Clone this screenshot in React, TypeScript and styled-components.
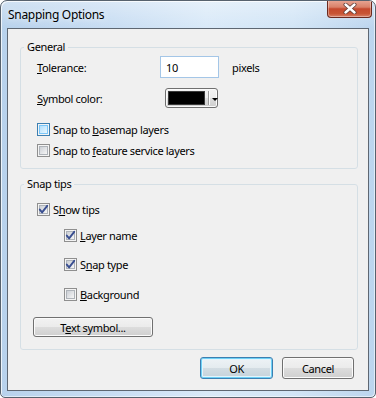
import React from "react";
import styled, { createGlobalStyle, css } from "styled-components";

const FONT = `"Noto Sans", "Open Sans", "DejaVu Sans", sans-serif`;

const Global = createGlobalStyle`
  html, body { margin: 0; padding: 0; background: #ffffff; }
  body { font-family: ${FONT}; font-size: 11px; color: #000; }
  * { box-sizing: border-box; }
`;

const Window = styled.div`
  width: 376px;
  height: 398px;
  display: flex;
  flex-direction: column;
  border: 1px solid #57626e;
  border-radius: 7px 7px 5px 5px;
  background:
    linear-gradient(to bottom, rgba(255,255,255,0.35) 0px, rgba(255,255,255,0) 27px),
    linear-gradient(to right, #b8d2ec 0%, #c8ddf3 30%, #d9e9f8 55%, #d2e5f6 78%, #bcd5ee 100%);
  box-shadow: inset 1px 1px 0 rgba(255,255,255,0.75), inset -1px -1px 0 rgba(255,255,255,0.55);
  overflow: hidden;
`;

const TitleBar = styled.div`
  height: 27px;
  flex: none;
  display: flex;
  align-items: center;
  justify-content: space-between;
  padding-left: 7px;
`;

const Title = styled.span`
  font-size: 12px;
  letter-spacing: -0.3px;
  color: #000;
  text-shadow: 0 0 6px rgba(255,255,255,0.9);
`;

const CloseButton = styled.div`
  align-self: flex-start;
  width: 45px;
  height: 18px;
  margin: -1px 3px 0 0;
  border: 1px solid #6b2a20;
  border-top: none;
  border-radius: 0 0 4px 4px;
  background: linear-gradient(#e9a896 0%, #d98169 42%, #c5492e 52%, #c85535 80%, #d8826a 100%);
  box-shadow: inset 0 0 0 1px rgba(255,255,255,0.35);
  display: flex;
  align-items: center;
  justify-content: center;
`;

const Client = styled.div`
  flex: 1;
  margin: 0 6px 6px 6px;
  border: 1px solid #5e6772;
  background: #f0f0f0;
  padding: 10px 10px 11px 12px;
  display: flex;
  flex-direction: column;
`;

const Group = styled.fieldset<{ $top?: number; $pb: number }>`
  margin: ${(p) => p.$top ?? 0}px 0 0 0;
  border: 1px solid #d5dfe5;
  border-radius: 3px;
  padding: 0 9px ${(p) => p.$pb}px 3px;
  min-width: 0;
`;

const Legend = styled.legend`
  padding: 0 3px;
  line-height: 16px;
  font-size: 11px;
  letter-spacing: -0.35px;
`;

const GroupBody = styled.div`
  display: flex;
  flex-direction: column;
  padding-left: 13px;
`;

const FieldRow = styled.div<{ $top: number; $h: number }>`
  display: flex;
  align-items: center;
  height: ${(p) => p.$h}px;
  margin-top: ${(p) => p.$top}px;
`;

const FieldLabel = styled.span<{ $w: number }>`
  width: ${(p) => p.$w}px;
  flex: none;
  letter-spacing: -0.35px;
`;

const Key = styled.span`
  text-decoration: underline;
  text-underline-offset: 1px;
  text-decoration-thickness: 1px;
`;

const TextInput = styled.input`
  width: 59px;
  height: 22px;
  border: 1px solid #a4c6e7;
  border-radius: 0;
  padding: 0 5px;
  font-family: ${FONT};
  font-size: 11px;
  letter-spacing: -0.35px;
  color: #000;
  background: #fff;
  outline: none;
`;

const Unit = styled.span`
  margin-left: 13px;
  letter-spacing: -0.35px;
`;

const ColorButton = styled.div`
  width: 53px;
  height: 20px;
  border: 1px solid #707070;
  border-radius: 3px;
  background: linear-gradient(#f2f2f2 0%, #ebebeb 50%, #dddddd 50%, #cfcfcf 100%);
  box-shadow: inset 0 0 0 1px #fbfbfb;
  display: flex;
  align-items: center;
  padding-left: 2px;
`;

const Swatch = styled.span<{ $color: string }>`
  width: 37px;
  height: 14px;
  background: ${(p) => p.$color};
  border: 1px solid #3a3a3a;
  flex: none;
`;

const Separator = styled.span`
  width: 2px;
  height: 14px;
  margin-left: 3px;
  border-left: 1px solid #9a9a9a;
  border-right: 1px solid #fbfbfb;
  flex: none;
`;

const Arrow = styled.span`
  margin-left: 2px;
  width: 0;
  height: 0;
  border-left: 3px solid transparent;
  border-right: 3px solid transparent;
  border-top: 3px solid #000;
  margin-top: 2px;
`;

const CheckRow = styled.div<{ $top: number; $indent?: number }>`
  display: flex;
  align-items: center;
  height: 13px;
  margin-top: ${(p) => p.$top}px;
  margin-left: ${(p) => p.$indent ?? 0}px;
`;

const Box = styled.span<{ $hot?: boolean }>`
  position: relative;
  width: 13px;
  height: 13px;
  flex: none;
  border: 1px solid ${(p) => (p.$hot ? "#3c7fb1" : "#8f8f8f")};
  background: #f4f4f4;
  padding: 1px;
  display: block;
`;

const BoxFill = styled.span<{ $hot?: boolean }>`
  display: block;
  width: 9px;
  height: 9px;
  ${(p) =>
    p.$hot
      ? css`
          border: 1px solid #79c6f9;
          background: linear-gradient(135deg, #b1dffd 0%, #e9f7fe 100%);
        `
      : css`
          border: 1px solid #aeb3b9;
          background: linear-gradient(135deg, #cbcfd5 0%, #f6f6f6 100%);
        `}
`;

const CheckMark = styled.svg`
  position: absolute;
  left: 0;
  top: 0;
`;

const CheckText = styled.span`
  margin-left: 3px;
  letter-spacing: -0.35px;
  line-height: 13px;
`;

const PushButton = styled.button<{ $w: number; $h: number; $default?: boolean; $shift?: number }>`
  width: ${(p) => p.$w}px;
  height: ${(p) => p.$h}px;
  margin-left: ${(p) => p.$shift ?? 0}px;
  padding: 0;
  font-family: ${FONT};
  font-size: 11px;
  letter-spacing: -0.35px;
  color: #000;
  border: 1px solid #707070;
  border-radius: 3px;
  background: linear-gradient(#f2f2f2 0%, #ebebeb 50%, #dddddd 50%, #cfcfcf 100%);
  box-shadow: inset 0 0 0 1px #fbfbfb;
  flex: none;
  ${(p) =>
    p.$default &&
    css`
      border-color: #3c7fb1;
      box-shadow: inset 0 0 0 1px #6fd0f5, inset 0 0 0 2px #e3f4fc;
      background: linear-gradient(#eef3f6 0%, #e4ebef 50%, #d3dde3 50%, #c5d2da 100%);
    `}
`;

const ButtonRow = styled.div`
  display: flex;
  justify-content: flex-end;
  gap: 9px;
  margin-top: 7px;
  padding-right: 4px;
`;

type CheckProps = {
  top: number;
  indent?: number;
  checked?: boolean;
  hot?: boolean;
  children: React.ReactNode;
};

function Check({ top, indent, checked, hot, children }: CheckProps) {
  return (
    <CheckRow $top={top} $indent={indent}>
      <Box $hot={hot}>
        <BoxFill $hot={hot} />
        {checked && (
          <CheckMark width="11" height="11" viewBox="0 0 11 11">
            <path
              d="M1.8 5.6 L4.1 8.4 L9.2 1.8"
              fill="none"
              stroke="#3a4f91"
              strokeWidth="1.9"
              strokeLinecap="round"
              strokeLinejoin="round"
            />
          </CheckMark>
        )}
      </Box>
      <CheckText>{children}</CheckText>
    </CheckRow>
  );
}

export default function App() {
  return (
    <>
      <Global />
      <Window>
        <TitleBar>
          <Title>Snapping Options</Title>
          <CloseButton>
            <svg width="14" height="11" viewBox="0 0 14 11">
              <path d="M2.5 1.5 L11.5 9.5 M11.5 1.5 L2.5 9.5" stroke="#5b3a34" strokeWidth="4" strokeLinecap="round" />
              <path d="M2.5 1.5 L11.5 9.5 M11.5 1.5 L2.5 9.5" stroke="#ffffff" strokeWidth="2.4" strokeLinecap="round" />
            </svg>
          </CloseButton>
        </TitleBar>
        <Client>
          <Group $pb={11}>
            <Legend>General</Legend>
            <GroupBody>
              <FieldRow $top={1} $h={22}>
                <FieldLabel $w={123}>
                  <Key>T</Key>olerance:
                </FieldLabel>
                <TextInput defaultValue="10" />
                <Unit>pixels</Unit>
              </FieldRow>
              <FieldRow $top={10} $h={20}>
                <FieldLabel $w={128}>
                  <Key>S</Key>ymbol color:
                </FieldLabel>
                <ColorButton>
                  <Swatch $color="#000000" />
                  <Separator />
                  <Arrow />
                </ColorButton>
              </FieldRow>
              <Check top={15} hot>
                Snap to <Key>b</Key>asemap layers
              </Check>
              <Check top={8}>
                Snap to <Key>f</Key>eature service layers
              </Check>
            </GroupBody>
          </Group>
          <Group $top={7} $pb={12}>
            <Legend>Snap tips</Legend>
            <GroupBody>
              <Check top={11} checked>
                S<Key>h</Key>ow tips
              </Check>
              <Check top={13} indent={27} checked>
                <Key>L</Key>ayer name
              </Check>
              <Check top={16} indent={27} checked>
                S<Key>n</Key>ap type
              </Check>
              <Check top={17} indent={27}>
                <Key>B</Key>ackground
              </Check>
              <FieldRow $top={16} $h={20}>
                <PushButton $w={120} $h={20} $shift={-4}>
                  T<Key>e</Key>xt symbol...
                </PushButton>
              </FieldRow>
            </GroupBody>
          </Group>
          <ButtonRow>
            <PushButton $w={73} $h={22} $default>
              OK
            </PushButton>
            <PushButton $w={72} $h={22}>
              Cancel
            </PushButton>
          </ButtonRow>
        </Client>
      </Window>
    </>
  );
}
